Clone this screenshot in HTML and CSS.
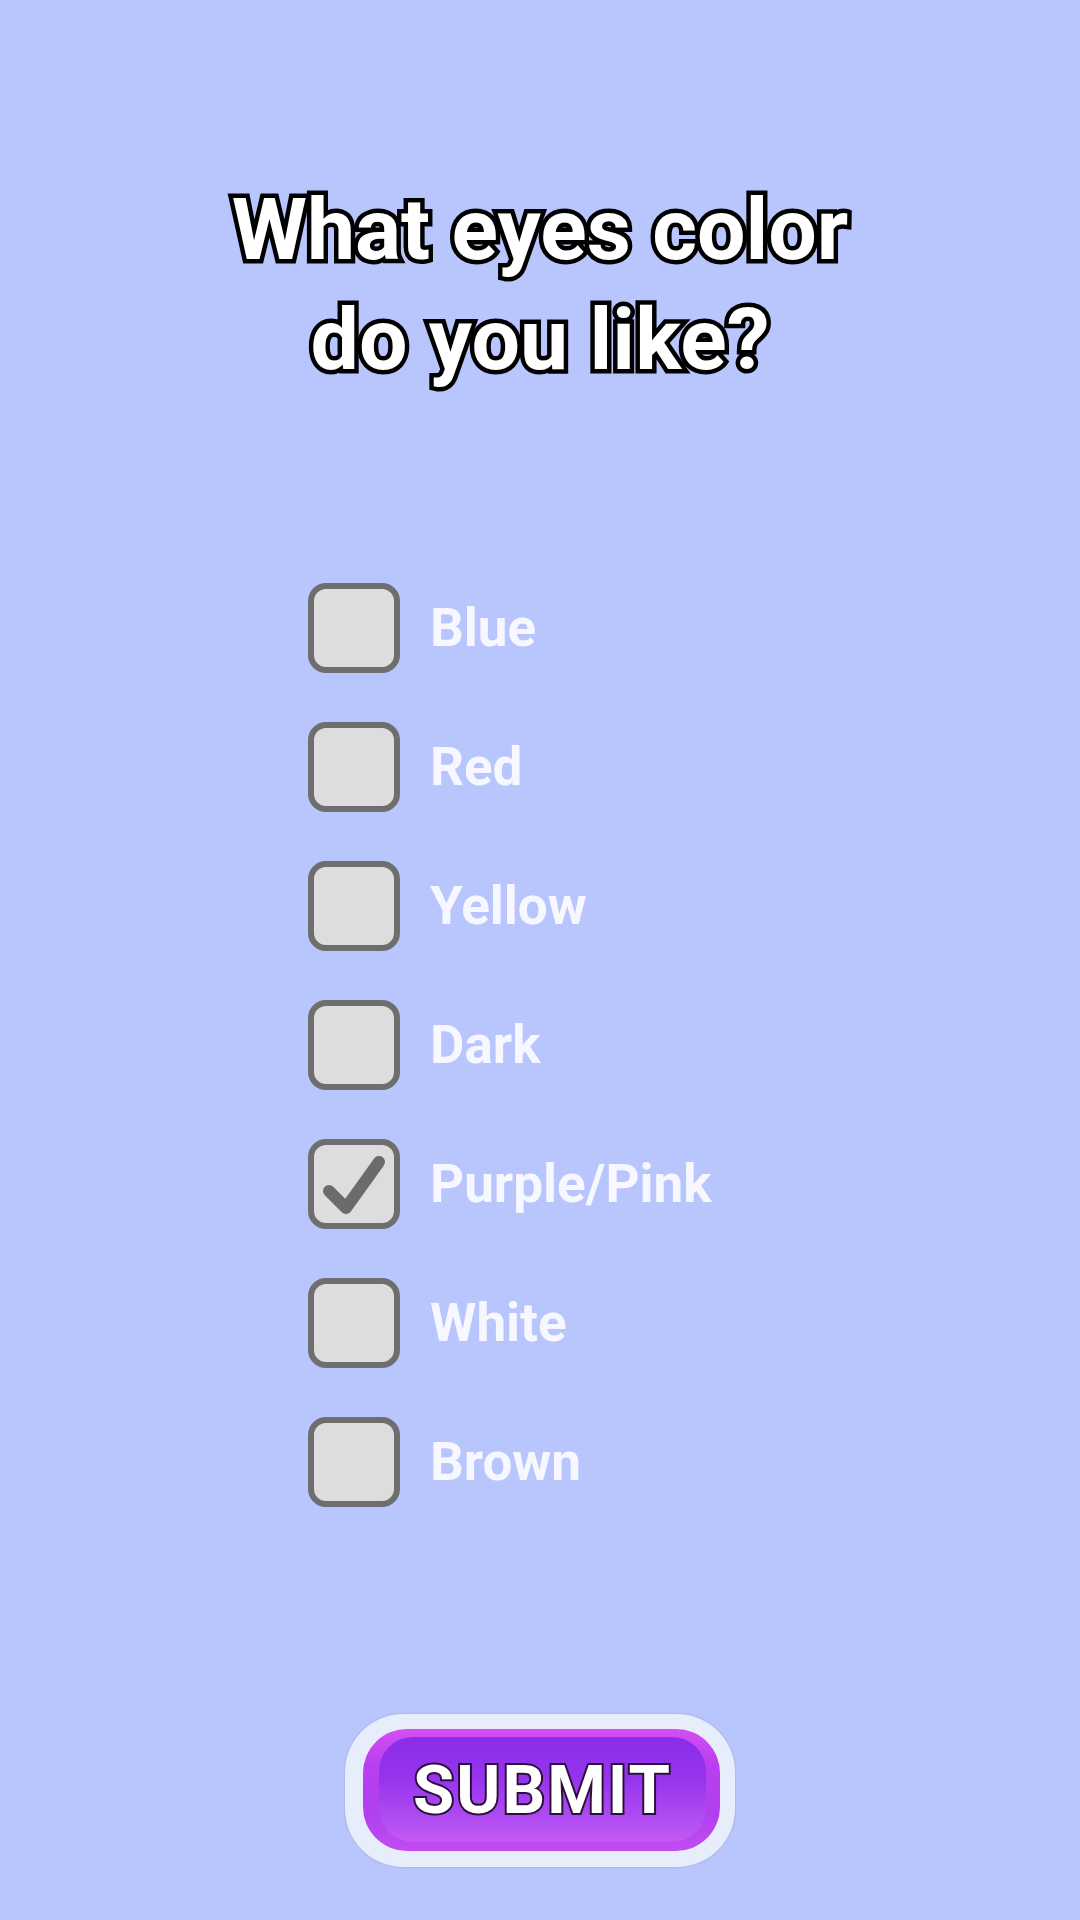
FILE: index.html
```html
<!DOCTYPE html>
<html>
<head>
<meta charset="utf-8">
<link rel="stylesheet" href="styles.css">
</head>
<body>
<div class="screen">
  <h1 class="title">What eyes color<br>do you like?</h1>
  <ul class="options">
    <li class="option"><span class="box"></span><span class="label">Blue</span></li>
    <li class="option"><span class="box"></span><span class="label">Red</span></li>
    <li class="option"><span class="box"></span><span class="label">Yellow</span></li>
    <li class="option"><span class="box"></span><span class="label">Dark</span></li>
    <li class="option"><span class="box checked"><svg class="check" viewBox="0 0 80 78"><polyline points="15,46 32,63 65,17" fill="none" stroke="#6b6b6b" stroke-width="12" stroke-linecap="round" stroke-linejoin="round"/></svg></span><span class="label">Purple/Pink</span></li>
    <li class="option"><span class="box"></span><span class="label">White</span></li>
    <li class="option"><span class="box"></span><span class="label">Brown</span></li>
  </ul>
  <div class="submit-wrap">
    <div class="submit-outer">
      <div class="submit-rim">
        <div class="submit-inner"><span class="submit-text">SUBMIT</span></div>
      </div>
    </div>
  </div>
</div>
</body>
</html>
```
FILE: styles.css
```css
html, body {
  margin: 0;
  padding: 0;
}
body {
  background: #b9c5fd;
  font-family: Roboto, "Liberation Sans", sans-serif;
}
.screen {
  width: 1080px;
  height: 1920px;
  display: flex;
  flex-direction: column;
}
.title {
  margin: 175px 0 0 0;
  text-align: center;
  font-size: 86px;
  line-height: 110px;
  font-weight: 700;
  color: #ffffff;
  -webkit-text-stroke: 9px #000000;
  paint-order: stroke fill;
}
.options {
  list-style: none;
  margin: 163px 0 0 0;
  padding: 0 0 0 308px;
  display: flex;
  flex-direction: column;
}
.option {
  height: 139px;
  display: flex;
  align-items: center;
  gap: 30px;
}
.box {
  box-sizing: border-box;
  width: 92px;
  height: 90px;
  border: 6px solid #6e6e6e;
  border-radius: 18px;
  background: #dddddd;
  position: relative;
  display: block;
}
.check {
  position: absolute;
  left: 0;
  top: 0;
  width: 80px;
  height: 78px;
}
.label {
  font-size: 53px;
  font-weight: 700;
  color: #f7f8ff;
}
.submit-wrap {
  margin-top: 183px;
  display: flex;
  justify-content: center;
}
.submit-outer {
  box-sizing: border-box;
  width: 390px;
  height: 153px;
  border-radius: 58px;
  background: #e7edfb;
  padding: 15px 15px 16px 18px;
  box-shadow: 0 0 2px rgba(120, 130, 170, 0.6);
}
.submit-rim {
  box-sizing: border-box;
  height: 100%;
  border-radius: 44px;
  background: linear-gradient(#d44ef3 0%, #b83ff0 30%, #b040ee 70%, #c24cf1 100%);
  padding: 8px 14px 9px 16px;
}
.submit-inner {
  height: 100%;
  border-radius: 34px;
  background: linear-gradient(#8a2de9 0%, #9634ed 40%, #b24ef2 80%, #c558f4 100%);
  display: flex;
  align-items: center;
  justify-content: center;
}
.submit-text {
  font-size: 67px;
  font-weight: 700;
  color: #ffffff;
  -webkit-text-stroke: 4px #2b0f3d;
  paint-order: stroke fill;
  letter-spacing: 2px;
  margin-left: 0;
}
```
